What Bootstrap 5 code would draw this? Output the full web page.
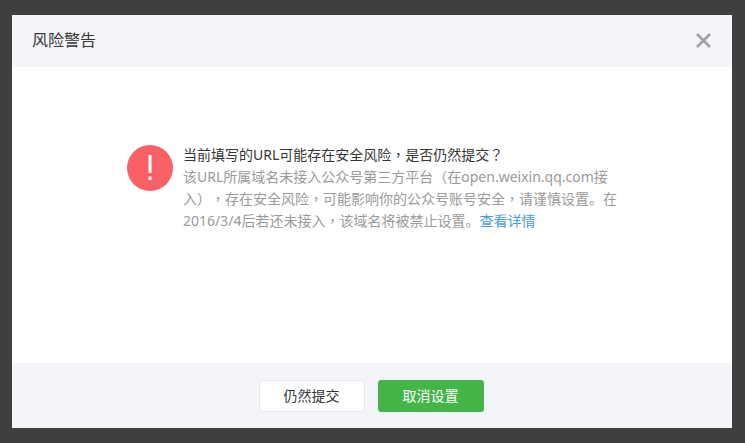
<!DOCTYPE html>
<html lang="zh-CN">
<head>
<meta charset="utf-8">
<title>风险警告</title>
<link rel="stylesheet" href="https://cdn.jsdelivr.net/npm/bootstrap@5.3.0/dist/css/bootstrap.min.css">
<style>
html, body { height: 100%; }
body { background: #3f3f3f; font-family: "Noto Sans", "Noto Sans CJK SC", sans-serif; font-size: 14px; overflow: hidden; text-spacing-trim: space-all; }
.stage { height: 443px; padding: 15px 13px 15px 12px; }
.dlg { height: 100%; border: 0; border-radius: 0; background: #fff; }
.dlg-head { height: 52px; padding: 0 20px; background: #f4f5f9; border: 0; border-radius: 0 !important; }
.dlg-title { margin: 0; font-size: 16px; font-weight: 400; color: #353535; }
.dlg-close { width: 18px; height: 18px; padding: 0; border: 0; background: none; line-height: 0; }
.dlg-main { padding: 78px 115px 0; }
.warn-ico { width: 46px; height: 46px; background: #fa6166; flex: none; }
.warn-text { margin: -1px 0 0 10px; width: 440px; line-height: 22px; }
.warn-lead { color: #353535; }
.warn-desc { color: #9a9a9a; }
.warn-link { color: #459ae9; text-decoration: none; }
.pun { font-family: "Noto Sans CJK TC", sans-serif; line-height: 1; }
.dlg-foot { height: 65px; background: #f4f5f9; border: 0; border-radius: 0 !important; padding: 0 2px 0 0; gap: 13px; }
.act-btn { width: 106px; height: 32px; padding: 0; font-size: 14px; line-height: 30px; border-radius: 3px; }
.act-plain { background: #fff; border: 1px solid #e4e6ec; color: #353535; }
.act-main { background: #44b549; border: 1px solid #44b549; color: #fff; }
</style>
</head>
<body>
<div class="stage">
  <div class="card dlg">
    <div class="card-header dlg-head d-flex align-items-center justify-content-between">
      <h5 class="dlg-title">风险警告</h5>
      <button type="button" class="dlg-close" aria-label="关闭">
        <svg width="18" height="18" viewBox="0 0 18 18"><path d="M3 2 16 15M16 2 3 15" stroke="#a0a1a5" stroke-width="2.600" fill="none"/></svg>
      </button>
    </div>
    <div class="card-body dlg-main d-flex align-items-start">
      <div class="warn-ico rounded-circle d-flex align-items-center justify-content-center">
        <svg width="6" height="26" viewBox="0 0 6 26"><path d="M1.500 0h3v18h-3zM1.500 21.500h3v3.500h-3z" fill="#fff"/></svg>
      </div>
      <div class="warn-text">
        <div class="warn-lead">当前填写的URL可能存在安全风险<span class="pun" lang="zh-TW">，</span>是否仍然提交<span class="pun" lang="zh-TW">？</span></div>
        <div class="warn-desc">该URL所属域名未接入公众号第三方平台（在open.weixin.qq.com接<br>入）<span class="pun" lang="zh-TW">，</span>存在安全风险<span class="pun" lang="zh-TW">，</span>可能影响你的公众号账号安全<span class="pun" lang="zh-TW">，</span>请谨慎设置。在<br>2016/3/4后若还未接入<span class="pun" lang="zh-TW">，</span>该域名将被禁止设置。<a class="warn-link" href="#">查看详情</a></div>
      </div>
    </div>
    <div class="card-footer dlg-foot d-flex align-items-center justify-content-center">
      <button type="button" class="btn act-btn act-plain">仍然提交</button>
      <button type="button" class="btn act-btn act-main">取消设置</button>
    </div>
  </div>
</div>
<script src="https://cdn.jsdelivr.net/npm/bootstrap@5.3.0/dist/js/bootstrap.bundle.min.js"></script>
</body>
</html>
